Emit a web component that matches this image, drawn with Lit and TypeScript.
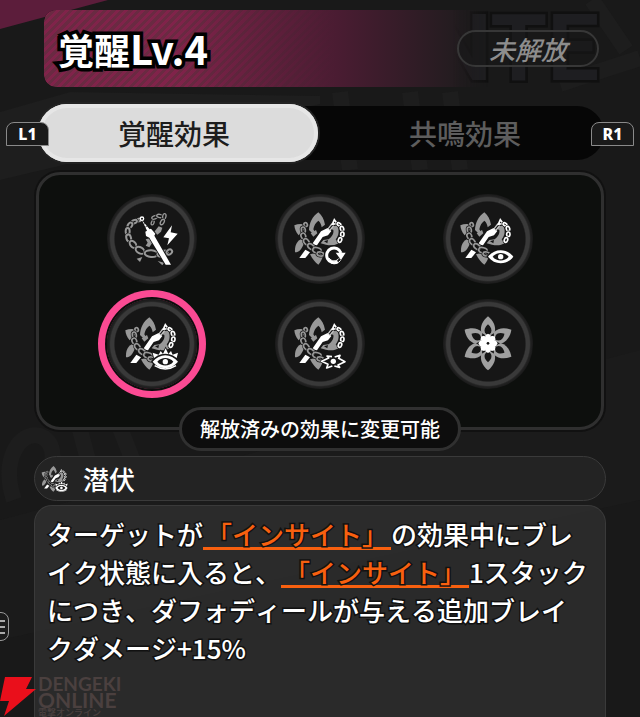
import { LitElement, html, svg, css } from "lit";
import { customElement, property, state } from "lit/decorators.js";
import { classMap } from "lit/directives/class-map.js";

const GRAY = "#989898";
const DISC = "#161616";

type Link = [number, number, number, number?, number?];

// One chain: each link is x, y, angle and optional radii.
const chain = (links: Link[], color: string, width: number) =>
  links.map(
    ([x, y, a, rx = 10, ry = 6]) => svg`
      <g transform="translate(${x} ${y}) rotate(${a})">
        <ellipse rx=${rx} ry=${ry} fill="none" stroke=${DISC} stroke-width=${width + 4}></ellipse>
        <ellipse rx=${rx} ry=${ry} fill="none" stroke=${color} stroke-width=${width}></ellipse>
      </g>`
  );

const emblem = svg`
  <g fill=${GRAY}>
    <path d="M175 97C157 110 148 128 147 150L160 163L165 156L160 148C162 136 167 128 175 122C181 127 184 134 185 142L195 134C192 118 186 106 175 97Z"></path>
    <path d="M103 136C113 132 124 131 135 134L131 150L124 160L116 166C108 157 104 147 103 136Z"></path>
    <path d="M123 178C108 186 104 200 105 217C111 217 117 215 121 210C127 202 131 194 133 186Z"></path>
    <path d="M150 223C157 237 165 247 175 254C182 247 186 238 190 225L170 218Z"></path>
    <path d="M212 146C220 138 228 135 233 140C238 152 237 166 227 178L236 190C226 196 212 198 198 194L182 190L190 180L206 178C216 170 222 160 220 150Z"></path>
    <path d="M152 160L168 150L172 160L160 170Z"></path>
  </g>
  <path d="M192 184L204 180L202 190Z" fill=${DISC}></path>
  <path d="M118 234L136 209L150 217L136 234Z" fill="#fff"></path>
  <path d="M156 193L183 154L203 144L214 153L204 166L188 171L171 196Z" fill="#fff" stroke=${DISC} stroke-width="3" paint-order="stroke"></path>
  <path d="M203 148L216 131M209 152L221 137" stroke="#c8c8c8" stroke-width="4"></path>
  <path d="M223 119L232 131L217 133Z" fill=${DISC} stroke="#fff" stroke-width="5"></path>
  ${chain([[137, 134, 70, 6, 5], [130, 150, 80, 9, 6], [130, 168, 70, 9, 7], [139, 185, 50, 10, 7], [153, 200, 35, 11, 7], [171, 211, 15, 13, 8], [181, 222, 10, 10, 6]], GRAY, 5)}
  ${chain([[237, 133, 30, 6, 4], [246, 146, 75, 7, 5], [247, 163, 95, 7, 5], [240, 180, 110, 7, 5]], "#fff", 5)}`;

const eye = (x: number, y: number) => svg`
  <g transform="translate(${x} ${y})">
    <path d="M-38 0C-18 -26 18 -26 38 0C18 26 -18 26 -38 0Z" fill="#fff" stroke=${DISC} stroke-width="8" paint-order="stroke"></path>
    <path d="M-24 0C-12 -15 12 -15 24 0C12 15 -12 15 -24 0Z" fill=${DISC}></path>
    <circle r="8" fill="#fff"></circle>
  </g>`;

const ICONS: Record<string, unknown> = {
  bolt: svg`
    <path d="M206 139L217 143L213 155L202 164L193 155Z" fill=${GRAY}></path>
    <path d="M167 178L182 174L187 188L178 202L167 197L173 188Z" fill=${GRAY}></path>
    <path d="M140 236L157 231L150 246Z M203 243L222 248L217 256Z" fill=${GRAY}></path>
    ${chain([[188, 128, 110, 7, 4], [194, 112, -20, 9, 5], [209, 108, 10, 9, 5], [223, 109, 100, 8, 5], [217, 126, 120, 9, 5]], GRAY, 4)}
    ${chain([[147, 120, -10, 7, 4], [133, 125, -25, 8, 5], [120, 136, -55, 9, 6], [113, 154, 90, 10, 6], [116, 174, 75, 11, 7], [129, 193, 50, 12, 8], [150, 211, 30, 14, 9], [184, 221, 5, 20, 10], [218, 221, -15, 16, 8], [238, 216, -40, 9, 7]], GRAY, 6)}
    <path d="M156 121L179 148L183 146L196 161L193 167L243 254L227 254L178 173L168 168L166 155L171 152Z" fill="#fff" stroke=${DISC} stroke-width="5" paint-order="stroke"></path>
    <circle cx="156" cy="116" r="5" fill=${DISC} stroke="#fff" stroke-width="4"></circle>
    <path d="M160 134L168 128M165 142L174 136" stroke=${DISC} stroke-width="2"></path>
    <path d="M246 136L242 157L263 161L232 196L237 175L220 172Z" fill="#fff"></path>`,
  cycle: svg`${emblem}
    <circle cx="222" cy="226" r="31" fill=${DISC}></circle>
    <path d="M233 245A22 22 0 1 1 243 219" fill="none" stroke="#fff" stroke-width="9"></path>
    <path d="M227 218H257L243 240Z" fill="#fff"></path>
    <path d="M207 234A18 18 0 0 0 237 235" fill="none" stroke="#fff" stroke-width="3"></path>
    <path d="M213 249A26 26 0 0 0 242 241" fill="none" stroke="#fff" stroke-width="3"></path>`,
  eye: svg`<g transform="translate(-12 0)">${emblem}</g>${eye(212, 230)}`,
  crown: svg`<g transform="translate(3 0)">${emblem}</g>
    <path d="M192 219L188 203L206 209L212 198L219 207L227 190L235 207L243 198L248 209L264 203L260 219Z" fill="#fff" stroke=${DISC} stroke-width="5" paint-order="stroke"></path>
    ${eye(226, 230)}
    <path d="M194 242Q226 262 258 242" fill="none" stroke="#fff" stroke-width="4"></path>`,
  focus: svg`${emblem}
    <path d="M180 228L206 208L240 206L260 230L230 254L200 252Z" fill=${DISC}></path>
    <g fill="none" stroke="#fff" stroke-width="5" stroke-linejoin="round">
      <path d="M216 215L201 213L206 219L185 229L204 238L200 249L217 243"></path>
      <path d="M224 216L240 211L236 220L255 230L234 240L239 247L223 243"></path>
    </g>
    <circle cx="220" cy="229" r="8" fill="#fff"></circle>`,
  flower: svg`
    <g transform="translate(174 175)">
      ${[0, 60, 120, 180, 240, 300].map(
        (a) => svg`<g transform="rotate(${a})">
          <path d="M0 -81C-16 -68 -25 -50 -20 -32L0 -20L20 -32C25 -50 16 -68 0 -81Z" fill="#a0a0a0"></path>
          <path d="M0 -57C-9 -49 -13 -40 -9 -32L0 -22L9 -32C13 -40 9 -49 0 -57Z" fill=${DISC}></path>
        </g>`
      )}
      ${[0, 45, 90, 135, 180, 225, 270, 315].map(
        (a) => svg`<path transform="rotate(${a})" d="M0 0L-9 -14L-8 -24L0 -29L8 -24L9 -14Z" fill="#fff"></path>`
      )}
      <circle r="4" fill=${DISC}></circle>
    </g>`,
};

@customElement("effect-icon")
class EffectIcon extends LitElement {
  @property() name = "flower";
  @property() box = "45 42 270 270";

  static styles = css`
    :host { display: block; }
    .glyph { display: block; width: 100%; height: 100%; }
  `;

  render() {
    return html`<svg class="glyph" viewBox=${this.box} aria-hidden="true">${ICONS[this.name]}</svg>`;
  }
}

interface Effect { icon: string; box: string; label: string; }

const EFFECTS: Effect[] = [
  { icon: "bolt", box: "51 42 270 270", label: "1" },
  { icon: "cycle", box: "45 42 270 270", label: "2" },
  { icon: "eye", box: "39 42 270 270", label: "3" },
  { icon: "crown", box: "51 42 270 270", label: "潜伏" },
  { icon: "focus", box: "45 42 270 270", label: "5" },
  { icon: "flower", box: "39 42 270 270", label: "6" },
];

@customElement("app-root")
class AppRoot extends LitElement {
  @state() private selected = 3;
  @state() private tab = 0;

  static styles = css`
    :host {
      display: block;
      position: relative;
      min-height: 100vh;
      overflow: hidden;
      box-sizing: border-box;
      background: #191919;
      color: #fff;
      font-family: "Noto Sans CJK JP", "Noto Sans", sans-serif;
      font-weight: 500;
    }
    button { font: inherit; color: inherit; border: 0; padding: 0; background: none; cursor: pointer; }
    .backdrop { position: absolute; inset: 0; width: 100%; height: 100%; }
    .page {
      position: relative;
      display: flex;
      flex-direction: column;
      min-height: 100vh;
      box-sizing: border-box;
      padding: 10px 34px 0;
    }
    .hero {
      position: relative;
      display: flex;
      align-items: center;
      justify-content: space-between;
      height: 77px;
      margin-left: 10px;
      padding: 0 7px 0 14px;
    }
    .hero-fill {
      position: absolute;
      inset: 0 21% 0 0;
      border-radius: 12px 0 0 12px;
      box-shadow: 0 0 0 2px #0c0c0c;
      background:
        linear-gradient(90deg, transparent 30%, #4a1c32 66%, #241c20 92%, #1b1a1b),
        repeating-linear-gradient(135deg, #6a2a42 0 3px, #80234a 3px 6px);
      -webkit-mask-image: linear-gradient(90deg, #000 92%, transparent);
    }
    .nte {
      position: absolute;
      right: 7px;
      top: 0;
      height: 78px;
      line-height: 78px;
      font-family: Roboto, "Liberation Sans", sans-serif;
      font-weight: 700;
      font-size: 92px;
      color: #1e1e21;
      -webkit-text-stroke: 5px #101010;
      paint-order: stroke fill;
    }
    .title {
      position: relative;
      margin: 0;
      font-size: 36px;
      line-height: 40px;
      font-weight: 700;
      -webkit-text-stroke: 7px #000;
      paint-order: stroke fill;
    }
    .level { font-size: 40px; }
    .status {
      position: relative;
      box-sizing: border-box;
      width: 142px;
      height: 37px;
      border: 2px solid #373737;
      border-radius: 19px;
      background: #17171799;
      color: #8d8d8d;
      font-size: 26px;
      line-height: 33px;
      font-style: italic;
      text-align: center;
    }
    .tabs {
      position: relative;
      display: flex;
      margin: 17px 2px 0 4px;
      height: 58px;
    }
    .track { position: absolute; inset: 2px 0; border-radius: 28px; background: #060606; }
    .tab {
      position: relative;
      flex: 1;
      padding-left: 8px;
      border-radius: 29px;
      font-size: 28px;
      line-height: 56px;
      color: #5d5d5d;
    }
    .tab.on {
      flex: 0 0 49.5%;
      padding: 0 8px 0 0;
      background: #dcdcdc;
      box-shadow: inset 0 0 0 4px #e6e6e6, 0 0 0 2px #232323;
      color: #1d1d1d;
    }
    .key {
      position: absolute;
      top: 18px;
      box-sizing: border-box;
      width: 43px;
      height: 24px;
      border: 1px solid #8a8a8a;
      border-radius: 8px 8px 0 0;
      background: #1a1a1a;
      font: 800 16px/22px "Noto Sans", sans-serif;
      text-align: center;
    }
    .key.left { left: -32px; }
    .key.right { right: -30px; }
    .panel {
      box-sizing: border-box;
      margin: 10px 2px 0;
      padding: 19px 29px 38px;
      border: 3px solid #2f2f2f;
      border-radius: 24px;
      background: #0d0f0d;
      box-shadow: 0 0 0 2px #111;
    }
    .effects { display: grid; grid-template-columns: repeat(3, 1fr); row-gap: 15px; justify-items: center; }
    .effect {
      display: grid;
      width: 90px;
      height: 90px;
      border-radius: 50%;
      background: radial-gradient(circle closest-side, #161616 82%, #393939 85%, #393939 92%, #222 95%, #191919 100%);
    }
    .effect.on { box-shadow: 0 0 0 2px #0d0e0d, 0 0 0 9px #fb4a93; }
    .notice {
      position: relative;
      align-self: center;
      box-sizing: border-box;
      height: 44px;
      margin: -23px 0 5px;
      padding: 0 18px;
      border: 3px solid #303030;
      border-radius: 22px;
      background: #0d0d0d;
      font-size: 20px;
      line-height: 38px;
    }
    .skill {
      display: flex;
      align-items: center;
      gap: 14px;
      box-sizing: border-box;
      height: 45px;
      margin: 0 0 4px;
      padding: 0 6px;
      border: 1px solid #3a3a3a;
      border-radius: 23px;
      background: #232323;
    }
    .skill-icon { width: 28px; height: 28px; }
    .skill-name { margin: 0; font-size: 26px; line-height: 40px; font-weight: 500; }
    .detail {
      flex: 1;
      box-sizing: border-box;
      padding: 9px 16px 50px 12px;
      border: 1px solid #3a3a3a;
      border-bottom: 0;
      border-radius: 18px 18px 0 0;
      background: #2c2c2ced;
    }
    .text {
      margin: 0;
      font-size: 26px;
      line-height: 38px;
      -webkit-text-stroke: 3px #111;
      paint-order: stroke fill;
      line-break: anywhere;
      text-spacing-trim: space-all;
      font-kerning: none;
    }
    .term {
      padding: 0 3px;
      background: linear-gradient(#f8600f, #f8600f) 0 32px / 100% 3px no-repeat;
      color: #f8600f;
      text-decoration: none;
    }
    .menu {
      position: absolute;
      left: -18px;
      top: 612px;
      display: flex;
      flex-direction: column;
      justify-content: center;
      align-items: flex-end;
      gap: 4px;
      box-sizing: border-box;
      width: 27px;
      height: 29px;
      padding-right: 3px;
      border: 1px solid #999;
      border-radius: 8px;
    }
    .bar { width: 16px; height: 2px; background: #aaa; }
    .mark { position: absolute; left: 0; bottom: 0; display: flex; align-items: flex-end; gap: 2px; }
    .spark { width: 36px; height: 40px; }
    .brand { font: 700 19px/16px Lato, sans-serif; color: #4b403f; }
    .brand-line { display: block; }
    .brand-line.wide { font-size: 21px; }
    .brand-sub { display: block; font: 500 9px/9px "Noto Sans CJK JP", sans-serif; }
  `;

  render() {
    return html`
      <svg class="backdrop" viewBox="0 0 640 717" preserveAspectRatio="none" aria-hidden="true">
        <path d="M0 0H108L0 29Z" fill="#5c1d3b"></path>
        <path d="M0 112L70 92L320 96V104L0 180Z" fill="#1e1e1e"></path>
        <g fill="none" stroke="#1d1d1d" stroke-width="16">
          <path d="M14 500C0 460 20 430 40 436C62 444 50 480 44 494"></path>
          <path d="M80 430L96 490M120 428L142 484"></path>
          <path d="M340 92L350 170M410 92L420 170M450 92L460 170"></path>
          <path d="M592 0L626 50M560 84L640 58"></path>
        </g>
        <path d="M0 520L640 350V500L0 640Z" fill="#1b1b1b"></path>
      </svg>
      <main class="page">
        <header class="hero">
          <div class="nte" aria-hidden="true">NTE</div>
          <div class="hero-fill"></div>
          <h1 class="title">覚醒<span class="level">Lv.4</span></h1>
          <div class="status">未解放</div>
        </header>
        <nav class="tabs">
          <div class="track"></div>
          ${["覚醒効果", "共鳴効果"].map(
            (t, i) => html`<button class=${classMap({ tab: true, on: this.tab === i })} @click=${() => (this.tab = i)}>${t}</button>`
          )}
          <kbd class="key left">L1</kbd>
          <kbd class="key right">R1</kbd>
        </nav>
        <section class="panel">
          <div class="effects">
            ${EFFECTS.map(
              (e, i) => html`<button
                class=${classMap({ effect: true, on: this.selected === i })}
                aria-label=${e.label}
                aria-pressed=${this.selected === i}
                @click=${() => (this.selected = i)}
              ><effect-icon name=${e.icon} box=${e.box}></effect-icon></button>`
            )}
          </div>
        </section>
        <div class="notice">解放済みの効果に変更可能</div>
        <div class="skill">
          <effect-icon class="skill-icon" name="crown" box="102 92 170 168"></effect-icon>
          <h2 class="skill-name">潜伏</h2>
        </div>
        <section class="detail">
          <p class="text">ターゲットが<a class="term" href="#insight">「インサイト」</a>の効果中にブレイク状態に入ると、<a class="term" href="#insight">「インサイト」</a>1スタックにつき、ダフォディールが与える追加ブレイクダメージ+15%</p>
        </section>
      </main>
      <button class="menu" aria-label="メニュー"><span class="bar"></span><span class="bar"></span><span class="bar"></span></button>
      <div class="mark">
        <svg class="spark" viewBox="0 0 36 40" aria-hidden="true"><path d="M5 0H32L26 12H36L4 39L9 24H0Z" fill="#ea0f1b"></path></svg>
        <div class="brand">
          <span class="brand-line">DENGEKI</span>
          <span class="brand-line wide">ONLINE</span>
          <span class="brand-sub">電撃オンライン</span>
        </div>
      </div>
    `;
  }
}
